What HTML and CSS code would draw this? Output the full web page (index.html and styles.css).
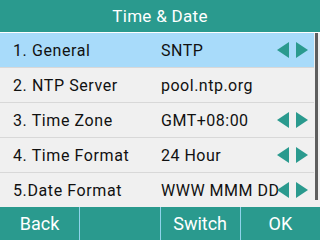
FILE: index.html
```html
<!DOCTYPE html>
<html>
<head>
<meta charset="utf-8">
<link rel="stylesheet" href="styles.css">
</head>
<body>
<div class="screen">
  <div class="header">Time &amp; Date</div>
  <div class="body">
    <div class="list">
      <div class="row selected">
        <span class="label">1. General</span>
        <span class="value">SNTP</span>
        <span class="arrows"><svg width="32" height="16" viewBox="0 0 32 16"><polygon points="12,0 12,16 0,8" fill="#2a9a8e"/><polygon points="19,0 19,16 31,8" fill="#2a9a8e"/></svg></span>
      </div>
      <div class="row">
        <span class="label">2. NTP Server</span>
        <span class="value">pool.ntp.org</span>
        <span class="arrows"></span>
      </div>
      <div class="row">
        <span class="label">3. Time Zone</span>
        <span class="value">GMT+08:00</span>
        <span class="arrows"><svg width="32" height="16" viewBox="0 0 32 16"><polygon points="12,0 12,16 0,8" fill="#2a9a8e"/><polygon points="19,0 19,16 31,8" fill="#2a9a8e"/></svg></span>
      </div>
      <div class="row">
        <span class="label">4. Time Format</span>
        <span class="value">24 Hour</span>
        <span class="arrows"><svg width="32" height="16" viewBox="0 0 32 16"><polygon points="12,0 12,16 0,8" fill="#2a9a8e"/><polygon points="19,0 19,16 31,8" fill="#2a9a8e"/></svg></span>
      </div>
      <div class="row last">
        <span class="label">5.Date Format</span>
        <span class="value">WWW MMM DD</span>
        <span class="arrows"><svg width="32" height="16" viewBox="0 0 32 16"><polygon points="12,0 12,16 0,8" fill="#2a9a8e"/><polygon points="19,0 19,16 31,8" fill="#2a9a8e"/></svg></span>
      </div>
    </div>
    <div class="scroll"><div class="thumb"></div></div>
  </div>
  <div class="footer">
    <div class="key">Back</div>
    <div class="key"></div>
    <div class="key">Switch</div>
    <div class="key">OK</div>
  </div>
</div>
</body>
</html>
```
FILE: styles.css
```css
html, body {
  margin: 0;
  padding: 0;
}
body {
  width: 320px;
  height: 240px;
  overflow: hidden;
  font-family: Roboto, "Liberation Sans", sans-serif;
  background: #f0f0f0;
}
.screen {
  width: 320px;
  height: 240px;
  display: flex;
  flex-direction: column;
}
.header {
  height: 32px;
  background: #2a9a8e;
  color: #fff;
  font-size: 17px;
  letter-spacing: 0.3px;
  display: flex;
  align-items: center;
  justify-content: center;
  border-bottom: 1px solid #ffffff;
  flex: none;
}
.body {
  flex: 1;
  display: flex;
  background: #f0f0f0;
}
.list {
  width: 315px;
  display: flex;
  flex-direction: column;
}
.row {
  flex: 1;
  display: flex;
  align-items: center;
  border-bottom: 1px solid #d8d8d8;
  font-size: 16px;
  color: #111;
  background: #f0f0f0;
}
.row.last {
  border-bottom: none;
}
.row.selected {
  background: #a8dbfa;
}
.label {
  width: 148px;
  padding-left: 13px;
  white-space: nowrap;
  letter-spacing: 0.6px;
}
.value {
  width: 116px;
  white-space: nowrap;
  letter-spacing: 0.5px;
}
.arrows {
  width: 32px;
  height: 16px;
  display: flex;
}
.scroll {
  width: 5px;
  padding-left: 1px;
}
.thumb {
  width: 3px;
  height: 167px;
  background: #5e5e5e;
}
.footer {
  height: 33px;
  flex: none;
  background: #2a9a8e;
  display: flex;
}
.key {
  flex: 1;
  color: #fff;
  font-size: 18px;
  display: flex;
  align-items: center;
  justify-content: center;
  border-left: 1px solid #8fd3ea;
}
.key:first-child {
  border-left: none;
}
```
